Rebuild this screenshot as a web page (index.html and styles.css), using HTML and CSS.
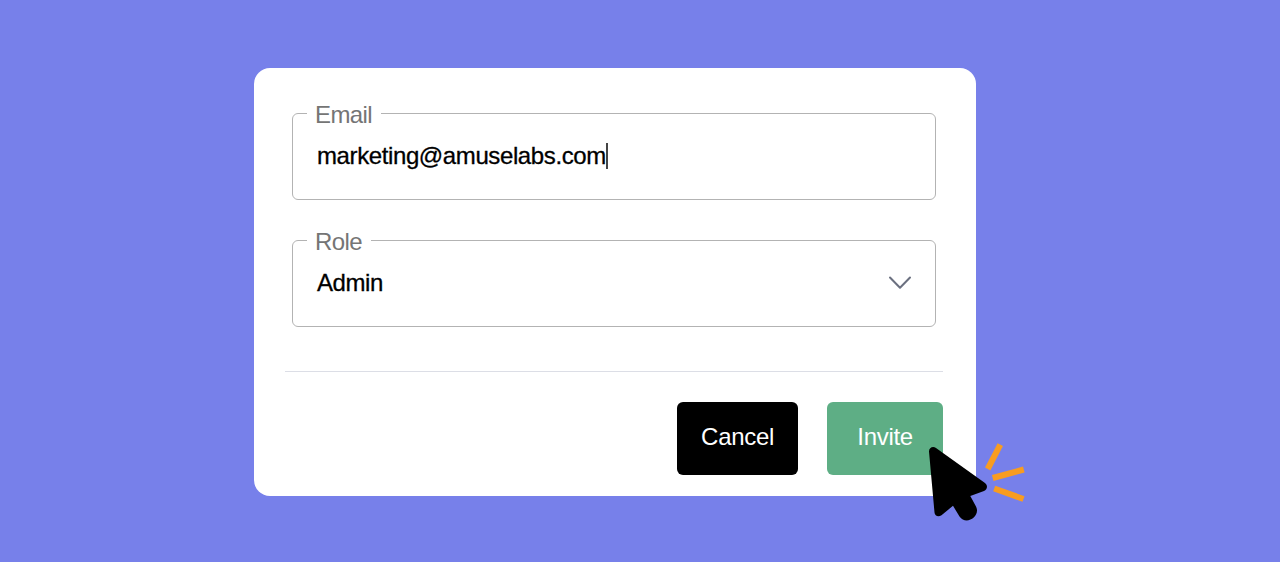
FILE: index.html
```
<!DOCTYPE html>
<html lang="en">
<head>
  <meta charset="utf-8">
  <meta name="viewport" content="width=device-width, initial-scale=1">
  <title>Invite</title>
  <link rel="stylesheet" href="styles.css">
</head>
<body>
  <form class="card">
    <fieldset class="field">
      <legend>Email</legend>
      <div class="value"><span class="email">marketing@amuselabs.com</span><i class="caret"></i></div>
    </fieldset>
    <fieldset class="field">
      <legend>Role</legend>
      <div class="value select">
        <span>Admin</span>
        <svg class="chevron" width="24" height="16" viewBox="0 0 24 16">
          <path d="M2 2.500 L12 12.800 L22 2.500"/>
        </svg>
      </div>
    </fieldset>
    <div class="actions">
      <button type="button" class="btn cancel">Cancel</button>
      <button type="button" class="btn invite">Invite</button>
    </div>
    <svg class="pointer" width="110" height="90" viewBox="920 440 110 90">
      <path class="arrow" d="M929 451.500 C929 447.500 933 445.800 936 448 L985 483 C988 485.500 987.500 489.500 984 491 L970.300 496 L976 506.500 C981 516.500 966 526 959.500 516.500 L953 505.800 L941.500 515.200 C938.500 517.500 934.700 516 934.500 512.500 Z"/>
      <path class="spark" d="M987.700 469 L1000.300 444.700 M992.700 478 L1023.800 469.500 M994.200 488.500 L1023.500 499"/>
    </svg>
  </form>
</body>
</html>
```
FILE: styles.css
```
*, :after, :before { box-sizing: border-box; }
html { background: #7780ea; }
body {
  min-height: 100vh;
  color: #000;
  font-family: "Liberation Sans", Helvetica, Arial, sans-serif;
  font-size: 24px;
  line-height: 28px;
  margin: 0;
  padding-top: 68px;
}
.card {
  position: relative;
  width: 722px;
  height: 428px;
  margin-left: 254px;
  padding: 31px 32.7px 0 31px;
  background: #fff;
  border-radius: 16px;
}
.field {
  width: 644px;
  height: 101px;
  margin: 0 0 26px 7px;
  padding: 0 23px 0 14px;
  border: 1px solid #b3b3b3;
  border-radius: 6px;
}
.field legend {
  padding: 3px 9px 0 8px;
  color: #757575;
  line-height: 26px;
  letter-spacing: -.6px;
}
.value {
  display: flex;
  align-items: center;
  padding: 14px 0 0 10px;
  letter-spacing: -.45px;
  -webkit-text-stroke: .3px #000;
}
.email { letter-spacing: -.39px; }
.caret {
  width: 2px;
  height: 26px;
  background: #444;
}
.select { justify-content: space-between; }
.chevron {
  fill: none;
  stroke: #6b7080;
  stroke-width: 2;
  stroke-linecap: round;
  stroke-linejoin: round;
}
.actions {
  display: flex;
  justify-content: flex-end;
  gap: 29px;
  margin-top: 44px;
  padding-top: 29.5px;
  border-top: 1px solid #dcdee6;
}
.btn {
  height: 73px;
  padding: 0 0 2px;
  border: 0;
  border-radius: 6px;
  color: #fff;
  font: inherit;
  letter-spacing: -.3px;
}
.cancel {
  width: 120.5px;
  background: #000;
}
.invite {
  width: 116.5px;
  background: #5eae85;
}
.pointer {
  position: absolute;
  left: 666px;
  top: 372px;
}
.arrow { fill: #000; }
.spark {
  fill: none;
  stroke: #f89c20;
  stroke-width: 6;
}
```
